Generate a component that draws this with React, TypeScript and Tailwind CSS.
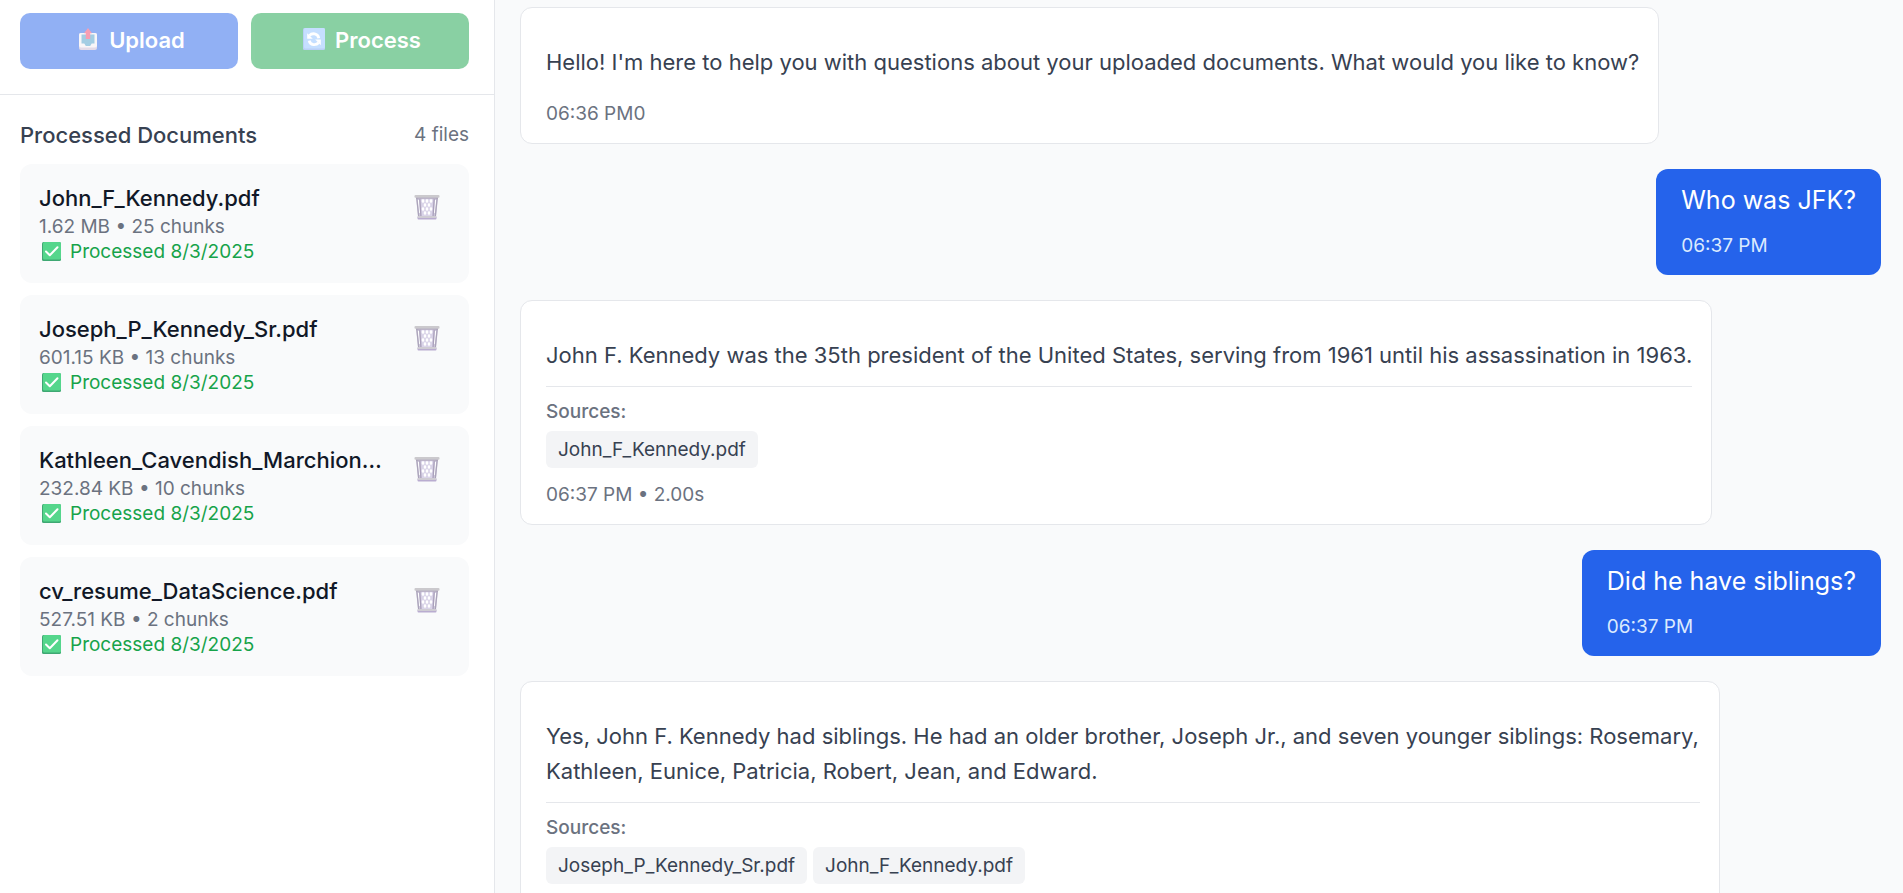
import type { ReactNode } from "react";

type Doc = { name: string; size: string; chunks: number; date: string };

type Message = {
  id: number;
  from: "user" | "assistant";
  text: string;
  meta: string;
  sources?: string[];
};

const docs: Doc[] = [
  { name: "John_F_Kennedy.pdf", size: "1.62 MB", chunks: 25, date: "8/3/2025" },
  { name: "Joseph_P_Kennedy_Sr.pdf", size: "601.15 KB", chunks: 13, date: "8/3/2025" },
  { name: "Kathleen_Cavendish_Marchioness.pdf", size: "232.84 KB", chunks: 10, date: "8/3/2025" },
  { name: "cv_resume_DataScience.pdf", size: "527.51 KB", chunks: 2, date: "8/3/2025" },
];

const messages: Message[] = [
  {
    id: 1,
    from: "assistant",
    text: "Hello! I'm here to help you with questions about your uploaded documents. What would you like to know?",
    meta: "06:36 PM0",
  },
  { id: 2, from: "user", text: "Who was JFK?", meta: "06:37 PM" },
  {
    id: 3,
    from: "assistant",
    text: "John F. Kennedy was the 35th president of the United States, serving from 1961 until his assassination in 1963.",
    meta: "06:37 PM • 2.00s",
    sources: ["John_F_Kennedy.pdf"],
  },
  { id: 4, from: "user", text: "Did he have siblings?", meta: "06:37 PM" },
  {
    id: 5,
    from: "assistant",
    text: "Yes, John F. Kennedy had siblings. He had an older brother, Joseph Jr., and seven younger siblings: Rosemary, Kathleen, Eunice, Patricia, Robert, Jean, and Edward.",
    meta: "",
    sources: ["Joseph_P_Kennedy_Sr.pdf", "John_F_Kennedy.pdf"],
  },
];

function OutboxIcon() {
  return (
    <svg viewBox="0 0 30 28" className="h-7 w-[30px] shrink-0" aria-hidden="true">
      <rect x="6" y="7" width="18" height="17" rx="2" fill="#c9b8d3" />
      <rect x="6" y="7" width="18" height="14.5" rx="2" fill="#f3eef3" />
      <path d="M8.500 8.500h13v9h-2.800l-1.500 2.500h-4.400l-1.500-2.500H8.500z" fill="#4a9cc9" />
      <path d="M15 2l4 5.200h-1.800V13h-4.400V7.200H11z" fill="#f0406a" />
    </svg>
  );
}

function RefreshIcon() {
  return (
    <svg viewBox="0 0 30 28" className="h-7 w-[30px] shrink-0" aria-hidden="true">
      <rect x="4" y="2" width="22" height="22" rx="1.500" fill="#78a2ee" />
      <rect x="5" y="2" width="21" height="20.500" rx="1.500" fill="#8cc0ff" />
      <path d="M10.400 9.600C13 6.700 18.800 7 19.800 12.200" fill="none" stroke="#fff" strokeWidth="2.800" />
      <path d="M8.200 7.200v5.600h5.600z" fill="#fff" />
      <path d="M19.600 16.800C17 19.700 11.200 19.400 10.200 14.600" fill="none" stroke="#fff" strokeWidth="2.800" />
      <path d="M21.800 19.200v-5.600h-5.600z" fill="#fff" />
    </svg>
  );
}

function CheckIcon() {
  return (
    <svg viewBox="0 0 25 25" className="size-[25px] shrink-0" aria-hidden="true">
      <rect x="3" y="3" width="19" height="19" rx="1.500" fill="#3fa873" />
      <rect x="4" y="3" width="18" height="17.500" rx="1.500" fill="#55d68c" />
      <path d="M7 12.500l3.800 3.800 7.700-8" fill="none" stroke="#fff" strokeWidth="2" strokeLinecap="round" strokeLinejoin="round" />
    </svg>
  );
}

function BasketIcon() {
  return (
    <svg viewBox="0 0 26 26" className="size-[26px]" aria-hidden="true">
      <path d="M2 3h22l-2 20.500H4z" fill="#cfc9dd" />
      <path d="M7 4h12l-.8 18H7.800z" fill="#d9d3e8" />
      <g fill="#fff">
        <path d="M9 4.500l1.600 2.500L9 9.500 7.400 7zM13 4.500l1.600 2.500L13 9.500 11.400 7zM17 4.500l1.600 2.500L17 9.500 15.400 7z" />
        <path d="M11 8.500l1.500 2.500-1.500 2.500L9.500 11zM15 8.500l1.500 2.500-1.500 2.500-1.500-2.500z" />
        <path d="M9 12.500l1.500 2.500L9 17.500 7.500 15zM13 12.500l1.500 2.500-1.500 2.500-1.500-2.500zM17 12.500l1.500 2.500-1.500 2.500-1.500-2.500z" />
        <path d="M11 16.500l1.500 2.500-1.500 2.500L9.500 19zM15 16.500l1.500 2.500-1.500 2.500-1.500-2.500z" />
        <path d="M3.800 6l1.200 0 1 13-.8 0zM22.200 6H21l-1 13h.8z" />
      </g>
      <path d="M2.800 4l1.900 18.500M23.200 4l-1.900 18.500" stroke="#aaa3b8" strokeWidth="1.200" fill="none" />
      <path d="M5.800 5l1.100 17M20.200 5l-1.100 17" stroke="#aaa0bb" strokeWidth="1.200" fill="none" />
      <rect x="0.500" y="1" width="25" height="2.800" rx="1" fill="#cbc9cd" />
      <path d="M2 4.200h22" stroke="#aaa3b5" strokeWidth="0.900" />
      <rect x="3.500" y="22.500" width="19" height="3" rx="1" fill="#b9acd0" />
      <rect x="3.500" y="22" width="19" height="2" rx="0.800" fill="#cfccd3" />
    </svg>
  );
}

function ActionButton({ className, icon, label }: { className: string; icon: ReactNode; label: string }) {
  return (
    <button
      type="button"
      disabled
      className={`flex h-14 flex-1 items-center justify-center gap-1.5 rounded-[10px] pb-0.5 text-[22px] font-semibold text-white opacity-50 ${className}`}
    >
      {icon}
      {label}
    </button>
  );
}

function DocumentCard({ doc }: { doc: Doc }) {
  return (
    <li className="flex items-start justify-between rounded-xl bg-[#f9fafb] p-[19px]">
      <div className="w-[348px] min-w-0">
        <p className="truncate text-[22px] leading-[31px] font-medium text-[#111827]">{doc.name}</p>
        <p className="text-[19px] leading-[25px] text-[#6b7280]">
          {doc.size} • {doc.chunks} chunks
        </p>
        <p className="flex items-center gap-1.5 text-[19px] leading-[25px] text-[#16a34a]">
          <CheckIcon />
          Processed {doc.date}
        </p>
      </div>
      <button type="button" aria-label={`Delete ${doc.name}`} className="mr-2.5 py-[11px]">
        <BasketIcon />
      </button>
    </li>
  );
}

function UserMessage({ message }: { message: Message }) {
  return (
    <article className="max-w-[1200px] self-end rounded-xl bg-[#2563eb] px-[25px] pt-[17px] pb-4">
      <p className="text-[25px] leading-7 text-white">{message.text}</p>
      <p className="mt-[19px] text-[19px] leading-[26px] text-[#dbeafe]">{message.meta}</p>
    </article>
  );
}

function AssistantMessage({ message }: { message: Message }) {
  return (
    <article className="max-w-[1200px] self-start rounded-xl border border-[#e5e7eb] bg-white pt-[17px] pr-[19px] pb-4 pl-[25px]">
      <p className="mt-5 text-[22px] leading-[35px] text-[#374151]">{message.text}</p>
      {message.sources ? (
        <div className="mt-[13px] mb-3.5 border-t border-[#e5e7eb] pt-3">
          <p className="text-[19px] leading-[26px] font-medium text-[#6b7280]">Sources:</p>
          <ul className="mt-1.5 flex flex-wrap gap-1.5">
            {message.sources.map((source) => (
              <li key={source} className="rounded-md bg-[#f3f4f6] px-3 py-1.5 text-[19px] leading-[25px] text-[#374151]">
                {source}
              </li>
            ))}
          </ul>
        </div>
      ) : (
        <div className="h-[21px]" />
      )}
      <p className="min-h-[26px] text-[19px] leading-[26px] text-[#6b7280]">{message.meta}</p>
    </article>
  );
}

export default function App() {
  return (
    <div className="flex h-screen overflow-hidden bg-[#f9fafb] font-['Inter',sans-serif]">
      <aside className="w-[495px] shrink-0 border-r border-[#e5e7eb] bg-white">
        <div className="flex gap-[13px] border-b border-[#e5e7eb] pt-[13px] pr-[25px] pb-[25px] pl-5">
          <ActionButton className="bg-[#2563eb]" icon={<OutboxIcon />} label="Upload" />
          <ActionButton className="bg-[#16a34a]" icon={<RefreshIcon />} label="Process" />
        </div>
        <section className="pt-6 pr-[25px] pl-5">
          <div className="mb-[13px] flex items-center justify-between">
            <h2 className="text-[22px] leading-8 font-medium text-[#374151]">Processed Documents</h2>
            <span className="text-[19px] leading-8 text-[#6b7280]">4 files</span>
          </div>
          <ul className="flex flex-col gap-3">
            {docs.map((doc) => (
              <DocumentCard key={doc.name} doc={doc} />
            ))}
          </ul>
        </section>
      </aside>
      <main className="flex min-w-0 flex-1 flex-col gap-[25px] overflow-hidden pt-[7px] pr-[22px] pl-[25px]">
        {messages.map((message) =>
          message.from === "user" ? (
            <UserMessage key={message.id} message={message} />
          ) : (
            <AssistantMessage key={message.id} message={message} />
          ),
        )}
      </main>
    </div>
  );
}
